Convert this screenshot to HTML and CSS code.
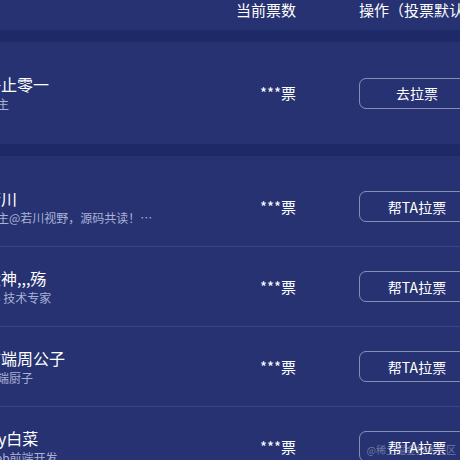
FILE: index.html
```
<!DOCTYPE html>
<html lang="zh-CN">
<head>
<meta charset="utf-8">
<link rel="stylesheet" href="styles.css">
</head>
<body>
<div class="table">
  <div class="card head">
    <div class="grid">
      <div class="h-name">作者</div>
      <div class="h-votes">当前票数</div>
      <div class="h-action">操作（投票默认1票）</div>
    </div>
  </div>
  <div class="card first">
    <div class="grid row">
      <div class="who"><div class="name">静止零一</div><div class="sub">博主</div></div>
      <div class="votes">***票</div>
      <div class="action"><span class="btn">去拉票</span></div>
    </div>
  </div>
  <div class="card list">
    <div class="grid row">
      <div class="who"><div class="name">若川</div><div class="sub">博主@若川视野，源码共读！欢迎关注交流</div></div>
      <div class="votes">***票</div>
      <div class="action"><span class="btn">帮TA拉票</span></div>
    </div>
    <div class="grid row">
      <div class="who"><div class="name">大神,,,殇</div><div class="sub">Go 技术专家</div></div>
      <div class="votes">***票</div>
      <div class="action"><span class="btn">帮TA拉票</span></div>
    </div>
    <div class="grid row">
      <div class="who"><div class="name">前端周公子</div><div class="sub">前端厨子</div></div>
      <div class="votes">***票</div>
      <div class="action"><span class="btn">帮TA拉票</span></div>
    </div>
    <div class="grid row">
      <div class="who"><div class="name">Ivy白菜</div><div class="sub">Web前端开发</div></div>
      <div class="votes">***票</div>
      <div class="action"><span class="btn">帮TA拉票</span></div>
    </div>
  </div>
</div>
<div class="watermark">@稀土掘金技术社区</div>
</body>
</html>
```
FILE: styles.css
```
html, body {
  margin: 0;
  padding: 0;
  width: 460px;
  height: 460px;
  overflow: hidden;
  background: #1e2968;
  font-family: "Noto Sans CJK SC", "Noto Sans", sans-serif;
  color: #ffffff;
}
.table {
  width: 554px;
  margin-left: -15px;
  display: flex;
  flex-direction: column;
  gap: 12px;
}
.card {
  background: #263272;
}
.grid {
  display: grid;
  grid-template-columns: 1fr 100px 180px;
  column-gap: 63px;
  align-items: center;
}
.head {
  height: 30px;
}
.head .grid {
  font-size: 15px;
  line-height: 20px;
}
.h-name {
  visibility: hidden;
}
.h-votes {
  text-align: right;
}
.h-action {
  white-space: nowrap;
}
.first {
  padding: 11px 0;
}
.list {
  padding-top: 11px;
  height: 400px;
}
.row {
  height: 80px;
  box-sizing: border-box;
}
.list .row {
  border-bottom: 1px solid #35448d;
}
.who {
  display: flex;
  flex-direction: column;
  gap: 3px;
  min-width: 0;
}
.name {
  font-size: 16px;
  line-height: 18px;
  white-space: nowrap;
}
.sub {
  font-size: 12px;
  line-height: 15px;
  color: #aab1d4;
  width: 172px;
  white-space: nowrap;
  overflow: hidden;
  text-overflow: ellipsis;
}
.votes {
  text-align: right;
  font-size: 15px;
  line-height: 20px;
}
.action {
  display: flex;
}
.btn {
  display: flex;
  align-items: center;
  justify-content: center;
  width: 116px;
  height: 31px;
  box-sizing: border-box;
  border: 1px solid rgba(255, 255, 255, 0.45);
  border-radius: 7px;
  font-size: 14px;
}
.watermark {
  position: absolute;
  right: 4px;
  bottom: 4px;
  font-size: 10px;
  line-height: 12px;
  color: rgba(255, 255, 255, 0.35);
}
```
